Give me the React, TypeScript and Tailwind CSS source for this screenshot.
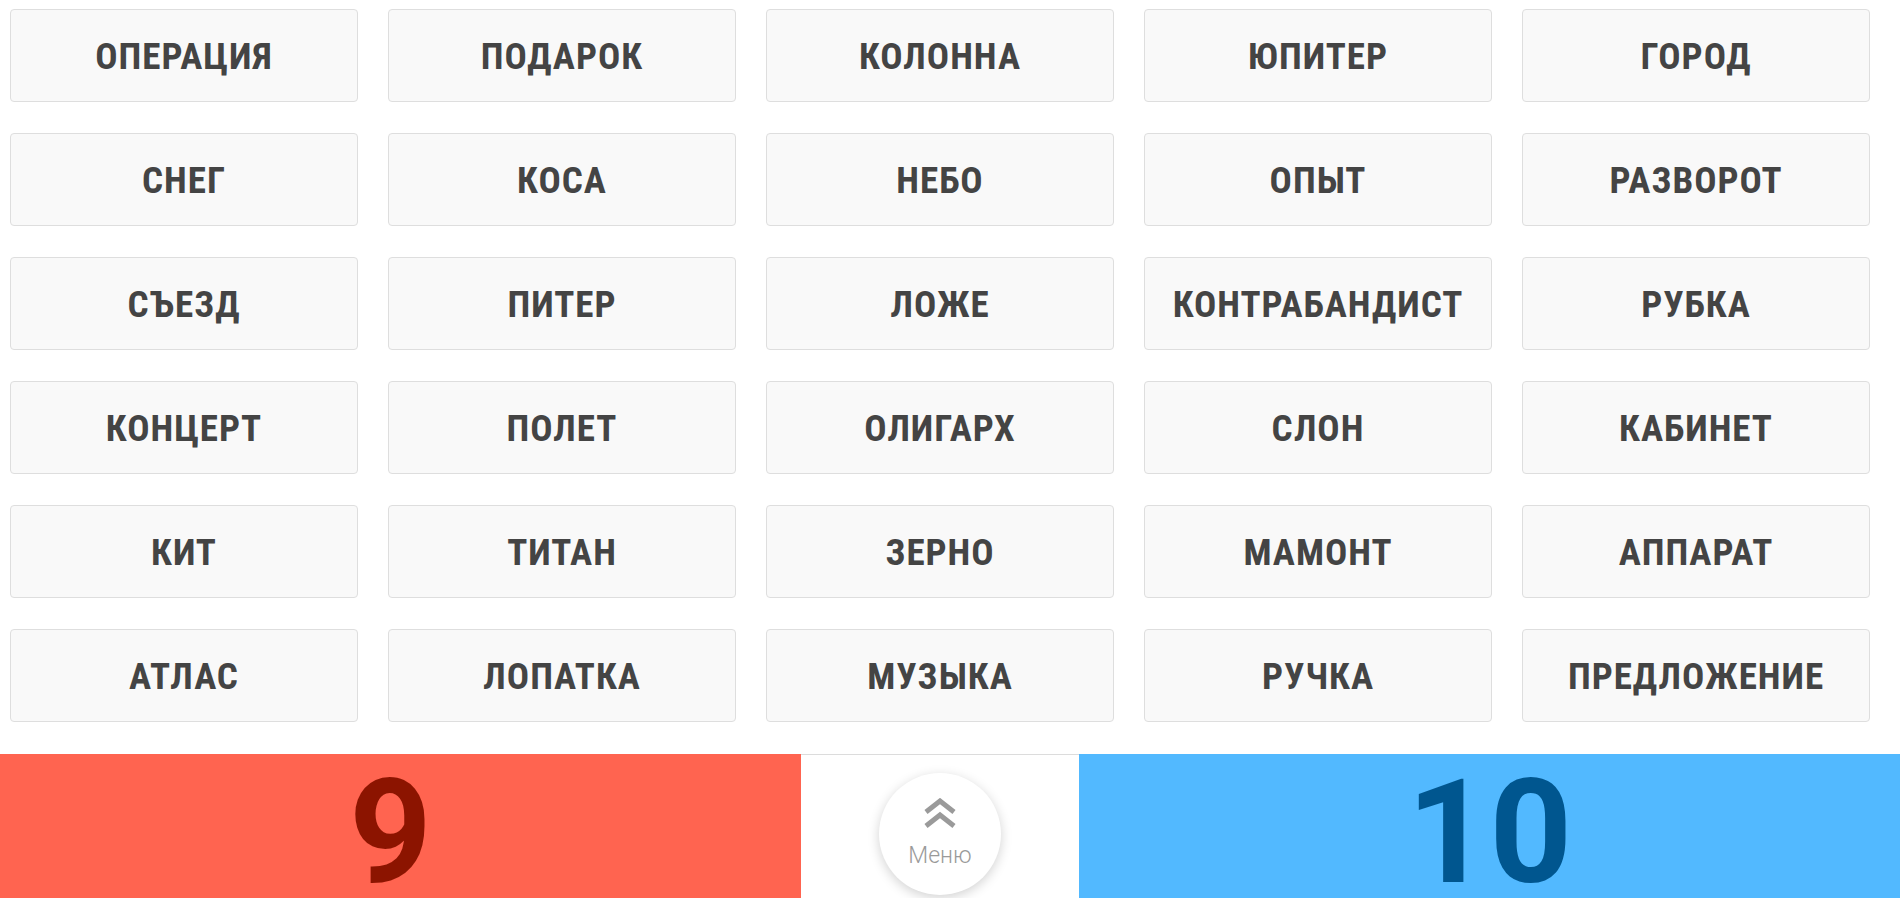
const words = [
  "ОПЕРАЦИЯ", "ПОДАРОК", "КОЛОННА", "ЮПИТЕР", "ГОРОД",
  "СНЕГ", "КОСА", "НЕБО", "ОПЫТ", "РАЗВОРОТ",
  "СЪЕЗД", "ПИТЕР", "ЛОЖЕ", "КОНТРАБАНДИСТ", "РУБКА",
  "КОНЦЕРТ", "ПОЛЕТ", "ОЛИГАРХ", "СЛОН", "КАБИНЕТ",
  "КИТ", "ТИТАН", "ЗЕРНО", "МАМОНТ", "АППАРАТ",
  "АТЛАС", "ЛОПАТКА", "МУЗЫКА", "РУЧКА", "ПРЕДЛОЖЕНИЕ",
];

function ChevronsUp() {
  return (
    <svg width="32" height="30" viewBox="0 0 32 30" fill="none" stroke="#9a9a9a" strokeWidth="5" strokeLinecap="butt" strokeLinejoin="miter">
      <polyline points="2,14 16,3 30,14" />
      <polyline points="2,28 16,17 30,28" />
    </svg>
  );
}

export default function App() {
  return (
    <div className="min-h-screen bg-white font-['Roboto',sans-serif]">
      {/* word cards */}
      <div className="grid grid-cols-[repeat(5,348px)] auto-rows-[93px] gap-x-[30px] gap-y-[31px] pt-[9px] pl-[10px] pr-[30px]">
        {words.map((w) => (
          <button
            key={w}
            className="flex items-center justify-center rounded-[4px] border border-[#dedede] bg-[#f9f9f9] pt-[2px] text-[37px] font-bold tracking-[1px] text-[#444] font-stretch-condensed"
          >
            {w}
          </button>
        ))}
      </div>

      {/* score bar */}
      <div className="mt-[32px] flex h-[144px]">
        <div className="flex w-[801px] justify-center bg-[#ff6450] pt-[7px] pr-[20px]">
          <span className="text-[144px] font-bold leading-none text-[#8c1400]">9</span>
        </div>
        <div className="flex w-[278px] justify-center border-t border-[#dcdcdc] bg-white pt-[18px]">
          <button className="flex h-[122px] w-[122px] flex-col items-center rounded-full bg-white pt-[25px] shadow-[0_3px_12px_rgba(0,0,0,0.18)]">
            <ChevronsUp />
            <span className="mt-[16px] text-[23px] font-light leading-none text-[#9a9a9a]">Меню</span>
          </button>
        </div>
        <div className="flex flex-1 justify-center bg-[#52b9ff] pt-[7px]">
          <span className="text-[144px] font-bold leading-none text-[#00568f]">10</span>
        </div>
      </div>
    </div>
  );
}
